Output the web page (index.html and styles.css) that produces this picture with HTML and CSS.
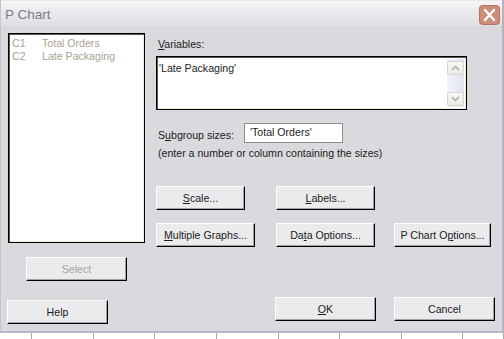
FILE: index.html
```html
<!DOCTYPE html>
<html lang="en">
<head>
    <meta charset="UTF-8">
    <title>P Chart</title>
    <link rel="stylesheet" href="styles.css">
</head>
<body>
    <div class="window">
        <div class="titlebar">
            <span class="title">P Chart</span>
            <span class="close">
                <svg width="21" height="20" viewBox="0 0 21 20">
                    <rect x="0.5" y="0.5" width="20" height="19" rx="3" fill="#cc8c78" stroke="#b6735f"/>
                    <path d="M6 5 L15 15 M15 5 L6 15" stroke="#fff" stroke-width="2.4" stroke-linecap="round"/>
                </svg>
            </span>
        </div>

        <div class="body">
            <div class="left">
                <div class="listbox">
                    <div class="item"><span class="col">C1</span>Total Orders</div>
                    <div class="item"><span class="col">C2</span>Late Packaging</div>
                </div>
                <button class="btn select" disabled>Select</button>
            </div>

            <div class="right">
                <div class="label"><u>V</u>ariables:</div>
                <div class="textbox">
                    <div class="text">'Late Packaging'</div>
                    <div class="scrollbar">
                        <span class="arrow">
                            <svg width="9" height="6" viewBox="0 0 9 6"><path d="M1 5 L4.5 1.5 L8 5" fill="none" stroke="#a9a9a2" stroke-width="1.5"/></svg>
                        </span>
                        <span class="track"></span>
                        <span class="arrow">
                            <svg width="9" height="6" viewBox="0 0 9 6"><path d="M1 1 L4.5 4.5 L8 1" fill="none" stroke="#a9a9a2" stroke-width="1.5"/></svg>
                        </span>
                    </div>
                </div>

                <div class="subgroup">
                    <span class="sublabel">S<u>u</u>bgroup sizes:</span>
                    <div class="input">'Total Orders'</div>
                </div>
                <div class="hint">(enter a number or column containing the sizes)</div>

                <div class="btnrow first">
                    <button class="btn scale"><u>S</u>cale...</button>
                    <button class="btn wide"><u>L</u>abels...</button>
                </div>
                <div class="btnrow">
                    <button class="btn wide"><u>M</u>ultiple Graphs...</button>
                    <button class="btn wide">Da<u>t</u>a Options...</button>
                    <button class="btn pchart">P Chart O<u>p</u>tions...</button>
                </div>
            </div>
        </div>

        <div class="footer">
            <button class="btn help">Help</button>
            <button class="btn ok"><u>O</u>K</button>
            <button class="btn cancel">Cancel</button>
        </div>
    </div>

    <div class="sheet">
        <span style="width:32px"></span>
        <span style="width:62px"></span>
        <span style="width:61px"></span>
        <span style="width:62px"></span>
        <span style="width:62px"></span>
        <span style="width:61px"></span>
        <span style="width:62px"></span>
        <span style="width:61px"></span>
        <span style="width:41px"></span>
    </div>
</body>
</html>
```

FILE: styles.css
```css
body {
    margin: 0;
    background-color: #fff;
    font-family: "Liberation Sans", Arial, sans-serif;
    font-size: 10.6px;
    color: #1a1a1a;
    width: 504px;
    height: 339px;
    overflow: hidden;
}
.window {
    width: 504px;
    height: 333px;
    box-sizing: border-box;
    background-color: #dadade;
    border-left: 1px solid #c4c4cc;
    border-right: 2px solid #b4b4c0;
    border-bottom: 2px solid #b8b8c8;
    display: flex;
    flex-direction: column;
}
.titlebar {
    height: 26px;
    box-sizing: border-box;
    display: flex;
    align-items: center;
    justify-content: space-between;
    padding: 0 2px 0 4px;
    background: linear-gradient(#f6f6f8, #ebebef 40%, #dedee4);
    border-top: 1px solid #e8e8ee;
}
.title {
    font-size: 13.5px;
    color: #7b7b80;
    padding-top: 1px;
}
.close {
    display: flex;
    margin-top: 2px;
}
.body {
    height: 271px;
    display: flex;
}
.left {
    width: 155px;
    box-sizing: border-box;
    padding-left: 7px;
}
.listbox {
    margin-top: 7px;
    width: 137px;
    height: 210px;
    box-sizing: border-box;
    background-color: #fff;
    border: 1px solid #000;
    box-shadow: inset 1px 1px 0 #555, inset -1px -1px 0 #efedd8;
    padding: 3px 3px;
}
.item {
    line-height: 12.5px;
    color: #aaa291;
}
.col {
    display: inline-block;
    width: 30px;
}
.btn {
    font-family: "Liberation Sans", Arial, sans-serif;
    font-size: 10.6px;
    color: #1a1a1a;
    height: 24px;
    padding: 0;
    background-color: #ebebee;
    border: 1px solid;
    border-color: #fff #000 #000 #fff;
    box-shadow: inset -1px -1px 0 #a0a0a6;
}
.select {
    margin: 14px 0 0 18px;
    width: 101px;
    color: #a3a3a3;
}
.right {
    flex: 1;
}
.label {
    margin-top: 12px;
    padding-left: 2px;
    line-height: 13px;
}
.textbox {
    margin-top: 5px;
    width: 311px;
    height: 54px;
    box-sizing: border-box;
    background-color: #fff;
    border: 1px solid #000;
    box-shadow: inset 1px 1px 0 #555, inset -1px -1px 0 #efedd8;
    display: flex;
    padding: 2px;
}
.text {
    flex: 1;
    padding-top: 3px;
    color: #222;
}
.scrollbar {
    width: 17px;
    display: flex;
    flex-direction: column;
    padding: 2px 0 1px;
    background: linear-gradient(90deg, #f2f4fb, #dfe4f2);
}
.arrow {
    height: 14px;
    box-sizing: border-box;
    border: 1px solid #d6d6ce;
    border-radius: 2px;
    background: linear-gradient(#f8f8f4, #ebebe4);
    display: flex;
    align-items: center;
    justify-content: center;
}
.track {
    flex: 1;
}
.subgroup {
    margin-top: 13px;
    display: flex;
    align-items: center;
}
.sublabel {
    width: 86px;
    padding: 3px 0 0 2px;
}
.input {
    width: 99px;
    height: 20px;
    box-sizing: border-box;
    background-color: #fff;
    border: 1px solid #8c8c90;
    padding: 2px 0 0 5px;
    color: #222;
}
.hint {
    margin-top: 4px;
    padding-left: 2px;
    line-height: 13px;
}
.btnrow {
    display: flex;
    margin-top: 13px;
}
.btnrow.first {
    margin-top: 26px;
}
.btn.scale {
    width: 89px;
    margin-right: 31px;
}
.btn.wide {
    width: 99px;
    margin-right: 21px;
}
.btn.pchart {
    width: 97px;
    margin-left: -2px;
}
.footer {
    display: flex;
    align-items: flex-start;
}
.btn.help {
    width: 101px;
    height: 24px;
    margin: 3px 0 0 6px;
}
.btn.ok {
    width: 101px;
    margin-left: 167px;
}
.btn.cancel {
    width: 101px;
    margin-left: 18px;
}
.sheet {
    height: 6px;
    display: flex;
}
.sheet span {
    border-right: 1px solid #a8a8a8;
    box-sizing: border-box;
}
```
